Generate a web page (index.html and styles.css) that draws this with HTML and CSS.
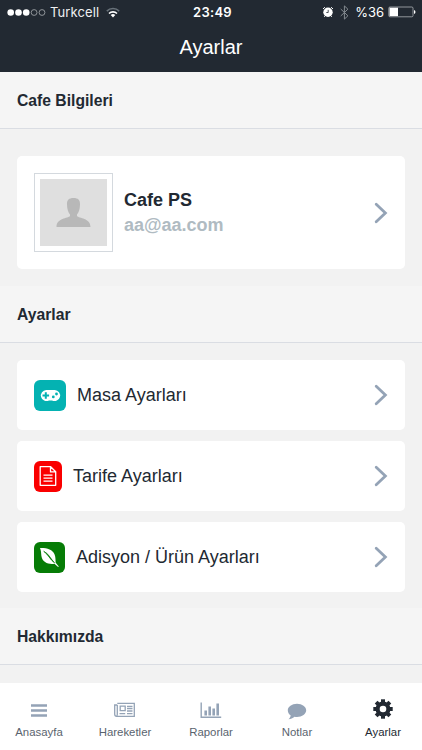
FILE: index.html
```html
<!DOCTYPE html>
<html lang="tr">
<head>
<meta charset="utf-8">
<meta name="viewport" content="width=device-width, initial-scale=1">
<title>Ayarlar</title>
<link rel="stylesheet" href="styles.css">
</head>
<body>
<div class="app">
  <header class="navbar">
    <div class="status">
      <div class="status-left">
        <svg class="signal" width="39" height="9" viewBox="0 0 39 9"><g fill="#fff"><circle cx="3.7" cy="4.500" r="3.300"/><circle cx="11.500" cy="4.500" r="3.300"/><circle cx="19.200" cy="4.500" r="3.300"/></g><g fill="none" stroke="#a9adb1" stroke-width=".8"><circle cx="27.100" cy="4.500" r="2.900"/><circle cx="35" cy="4.500" r="2.900"/></g></svg>
        <span class="carrier">Turkcell</span>
        <svg class="wifi" width="14" height="11" viewBox="0 0 14 11"><g fill="none" stroke-width="1.6"><path d="M.8 4.100a8.800 8.800 0 0 1 12.400 0" stroke="#69727a"/><path d="M3 6.500a5.700 5.700 0 0 1 8 0" stroke="#fff"/></g><path d="M4.700 8a3.300 3.300 0 0 1 4.600 0L7 10.400z" fill="#fff"/></svg>
      </div>
      <span class="clock">23:49</span>
      <div class="status-right">
        <svg width="12" height="12" viewBox="0 0 12 12"><circle cx="6" cy="6.300" r="4.700" fill="#fff"/><path d="M1 3 2.900 1.200M11 3 9.100 1.200M2.800 10.200l-.7.800m7.100-.8.700.8" stroke="#fff"/><path d="M6.200 3.800v2.700H4.300" fill="none" stroke="#222932" stroke-width=".8"/></svg>
        <svg class="bluetooth" width="9" height="15" viewBox="0 0 9 15"><path d="m.7 4 7.200 6.800-3.500 3.300V.9l3.500 3.300L.7 11" fill="none" stroke="#858b91"/></svg>
        <span class="charge">%36</span>
        <svg class="battery" width="28" height="12" viewBox="0 0 28 12"><rect x=".8" y="1" width="24.200" height="9.800" rx="1.200" fill="none" stroke="#aeb2b6" stroke-width=".8"/><path d="M1.500 1.700H10v8.400H1.500z" fill="#fff"/><path d="M26 4q1.500.3 1.500 2T26 8z" fill="#fff"/></svg>
      </div>
    </div>
    <h1>Ayarlar</h1>
  </header>

  <main>
    <h2>Cafe Bilgileri</h2>
    <section class="profile-section">
      <a class="card profile">
        <span class="avatar"><svg width="67" height="67" viewBox="0 0 67 67"><path d="M27 25.500C26.800 21 29 19 33.500 19S40.200 21 40 25.500C39.900 30 38.800 33.500 37 35.500V37C39 39.500 50.500 39 50.500 48H16.500C16.500 39 28 39.500 30 37V35.500C28.200 33.500 27.100 30 27 25.500z" fill="#b8b8b8"/></svg></span>
        <span class="identity"><strong>Cafe PS</strong><span class="email">aa@aa.com</span></span>
        <svg class="chevron" width="14" height="22" viewBox="0 0 14 22"><path d="m2.200 2.200 9.200 8.800-9.200 8.800"/></svg>
      </a>
    </section>

    <h2>Ayarlar</h2>
    <section class="settings">
      <a class="card row">
        <span class="tile teal"><svg width="21" height="13" viewBox="0 0 21 13"><path d="M6.200.9h8.600a5.600 5.600 0 1 1-2.800 10.600H9A5.600 5.600 0 1 1 6.200.9z" fill="#fff"/><path d="M5.800 3.200v6.600M2.500 6.500h6.600" stroke="#04b2b2" stroke-width="2"/><circle cx="16.500" cy="5" r="1.400" fill="#04b2b2"/><circle cx="13.300" cy="7.900" r="1.400" fill="#04b2b2"/></svg></span>
        <span class="label">Masa Ayarları</span>
        <svg class="chevron" width="14" height="22" viewBox="0 0 14 22"><path d="m2.200 2.200 9.200 8.800-9.200 8.800"/></svg>
      </a>
      <a class="card row">
        <span class="tile red"><svg width="18" height="20" viewBox="0 0 18 20"><path d="M1.200.7h10.500l5 5v13.600H1.200zM11.500.7v5.200h5.200M4.500 9.200h9M4.500 12.200h9M4.500 15.200h9" fill="none" stroke="#fff" stroke-width="1.300" stroke-linejoin="round"/></svg></span>
        <span class="label">Tarife Ayarları</span>
        <svg class="chevron" width="14" height="22" viewBox="0 0 14 22"><path d="m2.200 2.200 9.200 8.800-9.200 8.800"/></svg>
      </a>
      <a class="card row">
        <span class="tile green"><svg width="21" height="21" viewBox="0 0 21 21"><path d="M1 1c7-.2 12.500 1.300 14.600 6.400 1.200 2.900.8 6.300 1.100 8.300l3.100 3.700-.7.600-3.600-3.300C9.500 17.500 3.500 15.700 2.400 9 2 6 2.200 3.500 1 1z" fill="#fff"/><path d="M4.700 4.300c4.900 2.200 6.400 6.900 10.800 11.500C10.800 12.400 9.300 7.500 4.700 4.300z" fill="#067c06" stroke="#067c06" stroke-width=".7"/></svg></span>
        <span class="label">Adisyon / Ürün Ayarları</span>
        <svg class="chevron" width="14" height="22" viewBox="0 0 14 22"><path d="m2.200 2.200 9.200 8.800-9.200 8.800"/></svg>
      </a>
    </section>
    <h2>Hakkımızda</h2>
  </main>

  <nav class="tabs">
    <a><svg width="24" height="24" viewBox="0 0 24 24"><path d="M4 6.500h16M4 11.500h16M4 16.500h16" stroke="#94a3b6" stroke-width="2.500"/></svg><span>Anasayfa</span></a>
    <a><svg width="24" height="24" viewBox="0 0 24 24"><g fill="none" stroke="#94a3b6" stroke-width="1.300"><path d="M4.300 4.300h17v13H3.700c-1.500 0-2-.7-2-2V6h2.600"/><path d="M4.300 6v9.300c0 1.200-.3 2-1 2M7.200 7.200h5v4.500h-5zM14 7.500h5.500M14 9.700h5.500M14 12h5.500M6.500 14.700h5.700m1.800 0h5.500"/></g></svg><span>Hareketler</span></a>
    <a><svg width="24" height="24" viewBox="0 0 24 24"><path d="M2.200 3.500v14.800h20" fill="none" stroke="#94a3b6" stroke-width="1.400"/><path d="M6.700 16.500v-5M10.700 16.500v-9M14.700 16.500v-7M18.700 16.500v-12" stroke="#94a3b6" stroke-width="2.600"/></svg><span>Raporlar</span></a>
    <a><svg width="24" height="24" viewBox="0 0 24 24"><path d="M12 4.700c5.100 0 9.200 3 9.200 6.600 0 3.700-4.100 6.700-9.200 6.700-.9 0-1.700-.1-2.500-.2-1.800 1.500-3.600 2.300-6 2.400 1.200-1 2-2.100 2.200-3.700-1.800-1.200-2.900-3-2.900-5.200 0-3.600 4.100-6.600 9.200-6.600z" fill="#94a3b6"/></svg><span>Notlar</span></a>
    <a class="active"><svg width="24" height="24" viewBox="0 0 24 24"><g fill="#222932"><path id="tooth" d="M10 .3h4v19.400h-4z"/><use href="#tooth" transform="rotate(45 12 10)"/><use href="#tooth" transform="rotate(90 12 10)"/><use href="#tooth" transform="rotate(135 12 10)"/><circle cx="12" cy="10" r="7.500"/></g><circle cx="12" cy="10" r="3.300" fill="#fff"/></svg><span>Ayarlar</span></a>
  </nav>
</div>
</body>
</html>
```
FILE: styles.css
```css
* { box-sizing: border-box; }
body { margin: 0; background: #f2f2f2; color: #222932; font-family: "Liberation Sans", Arial, sans-serif; }
svg { display: block; flex: none; overflow: visible; }
.app { width: 422px; height: 750px; display: flex; flex-direction: column; overflow: hidden; }
.navbar { height: 72px; flex: none; background: #222932; color: #fff; }
.status { height: 24px; display: grid; grid-template-columns: 1fr auto 1fr; align-items: center; padding: 0 6px 0 7px; font: 13px/24px Inter, sans-serif; }
.status-left, .status-right { display: flex; align-items: center; }
.status-right { justify-content: flex-end; }
.carrier { margin-left: 4px; color: #eef0f1; letter-spacing: .1px; }
.wifi { margin-left: 7px; }
.clock { margin-left: 2px; font-weight: 600; letter-spacing: .3px; }
.bluetooth { margin: 0 6px; }
.battery { margin-left: 4px; }
h1 { margin: 0; font-size: 20px; line-height: 46px; font-weight: 400; text-align: center; }
main { flex: 1; min-height: 0; overflow: hidden; }
h2 { margin: 0; height: 57px; padding: 0 17px; border-bottom: 1px solid #dadde3; background: #f5f5f5; font-size: 15.7px; line-height: 57px; font-weight: 700; }
.card { display: flex; align-items: center; padding: 0 17px; background: #fff; border-radius: 5px; }
.profile-section { padding: 27px 17px 17px; }
.profile { height: 113px; }
.avatar { width: 79px; height: 79px; padding: 5px; border: 1px solid #d4d9de; }
.avatar svg { background: #dfdfdf; }
.identity { display: flex; flex-direction: column; margin: 1px 0 0 11px; font-size: 18px; line-height: 25px; font-weight: 700; }
.email { color: #b0bbc2; }
.chevron { margin-left: auto; fill: none; stroke: #94a3b6; stroke-width: 2.8; stroke-linecap: round; }
.settings { display: grid; gap: 11px; padding: 17px 17px 16px; }
.row { height: 70px; }
.tile { height: 31px; display: flex; align-items: center; justify-content: center; border-radius: 6px; }
.teal { width: 32px; background: #04b2b2; }
.red { width: 28px; background: #fa0000; }
.green { width: 31px; background: #067c06; }
.label { margin-left: 11px; font-size: 18px; line-height: 24px; }
.tabs { display: grid; grid-template-columns: repeat(5, 86px); height: 67px; flex: none; margin: 0 -4px; background: #fff; }
.tabs a { display: flex; flex-direction: column; align-items: center; padding-top: 16px; color: #59636e; font-size: 11.4px; line-height: 18px; }
.tabs .active { color: #222932; }
```
